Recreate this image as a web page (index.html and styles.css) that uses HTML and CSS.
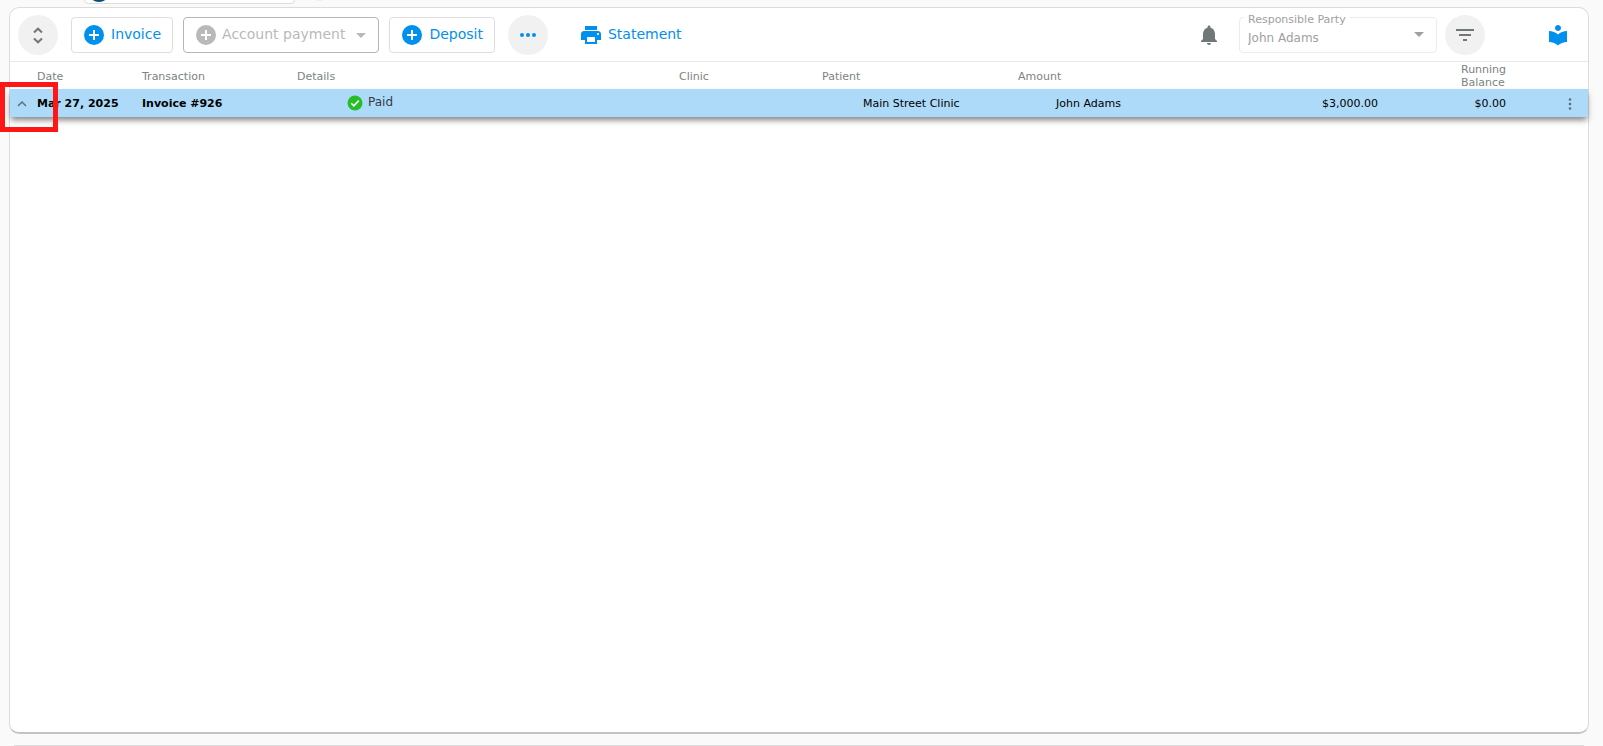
FILE: index.html
```html
<!DOCTYPE html>
<html lang="en">
<head>
<meta charset="utf-8">
<title>Transactions</title>
<link rel="stylesheet" href="styles.css">
</head>
<body>
<div class="page">
  <div class="tabs" aria-hidden="true">
    <div class="tabs__chip"><span class="tabs__avatar"></span></div>
    <div class="tabs__round"></div>
  </div>
  <main class="card">
    <div class="toolbar">
      <button class="round" type="button" aria-label="Expand all">
        <svg class="icon" viewBox="0 0 24 24"><path d="m8 9.500 4-3.800 4 3.800M8 15.500l4 3.800 4-3.800" fill="none" stroke="currentColor" stroke-width="2"/></svg>
      </button>
      <button class="btn btn--invoice" type="button">
        <svg class="icon" viewBox="0 0 24 24"><path d="M12 2a10 10 0 1 0 0 20 10 10 0 0 0 0-20zm5 11h-4v4h-2v-4H7v-2h4V7h2v4h4v2z"/></svg>
        <span>Invoice</span>
      </button>
      <button class="btn btn--disabled" type="button" disabled>
        <svg class="icon" viewBox="0 0 24 24"><path d="M12 2a10 10 0 1 0 0 20 10 10 0 0 0 0-20zm5 11h-4v4h-2v-4H7v-2h4V7h2v4h4v2z"/></svg>
        <span>Account payment</span>
        <svg class="icon icon--caret" viewBox="0 0 24 24"><path d="m7 10 5 5 5-5z"/></svg>
      </button>
      <button class="btn" type="button">
        <svg class="icon" viewBox="0 0 24 24"><path d="M12 2a10 10 0 1 0 0 20 10 10 0 0 0 0-20zm5 11h-4v4h-2v-4H7v-2h4V7h2v4h4v2z"/></svg>
        <span>Deposit</span>
      </button>
      <button class="round round--more" type="button" aria-label="More">
        <svg class="icon" viewBox="0 0 24 24"><path d="M6 10a2 2 0 1 0 0 4 2 2 0 0 0 0-4zm12 0a2 2 0 1 0 0 4 2 2 0 0 0 0-4zm-6 0a2 2 0 1 0 0 4 2 2 0 0 0 0-4z"/></svg>
      </button>
      <button class="btn btn--plain" type="button">
        <svg class="icon" viewBox="0 0 24 24"><path d="M19 8H5c-1.660 0-3 1.340-3 3v6h4v4h12v-4h4v-6c0-1.660-1.340-3-3-3zm-3 11H8v-5h8v5zm3-7c-.550 0-1-.450-1-1s.450-1 1-1 1 .450 1 1-.450 1-1 1zm-1-9H6v4h12V3z"/></svg>
        <span>Statement</span>
      </button>
      <div class="toolbar__end">
        <button class="iconbtn" type="button" aria-label="Notifications">
          <svg class="icon" viewBox="0 0 24 24"><path d="M12 22c1.100 0 2-.900 2-2h-4c0 1.100.890 2 2 2zm6-6v-5c0-3.070-1.640-5.640-4.500-6.320V4c0-.830-.670-1.500-1.500-1.500s-1.500.670-1.500 1.500v.680C7.630 5.360 6 7.920 6 11v5l-2 2v1h16v-1l-2-2z"/></svg>
        </button>
        <div class="field">
          <label class="field__label" for="party">Responsible Party</label>
          <select class="field__select" id="party" disabled><option>John Adams</option></select>
          <svg class="icon field__caret" viewBox="0 0 24 24"><path d="m7 10 5 5 5-5z"/></svg>
        </div>
        <button class="round" type="button" aria-label="Filter">
          <svg class="icon" viewBox="0 0 24 24"><path d="M10 18h4v-2h-4v2zM3 6v2h18V6H3zm3 7h12v-2H6v2z"/></svg>
        </button>
        <button class="iconbtn iconbtn--guide" type="button" aria-label="Guide">
          <svg class="icon" viewBox="0 0 24 24"><path d="M12 11.550C9.640 9.350 6.480 8 3 8v11c3.480 0 6.640 1.350 9 3.550 2.360-2.190 5.520-3.550 9-3.550V8c-3.480 0-6.640 1.350-9 3.550zM12 8c1.660 0 3-1.340 3-3s-1.340-3-3-3-3 1.340-3 3 1.340 3 3 3z"/></svg>
        </button>
      </div>
    </div>
    <table class="ledger">
      <thead>
        <tr class="ledger__head">
          <td></td><th>Date</th><th>Transaction</th><th>Details</th><th>Clinic</th><th>Patient</th><th>Amount</th><th class="ledger__balance">Running<br>Balance</th>
        </tr>
      </thead>
      <tbody>
        <tr class="ledger__row">
          <td class="ledger__toggle">
            <button class="cellbtn" type="button" aria-label="Collapse">
              <svg class="icon icon--small" viewBox="0 0 16 16"><path d="m4 10 4-4 4 4" fill="none" stroke="currentColor" stroke-width="1.500"/></svg>
            </button>
            <span class="highlight"></span>
          </td>
          <td class="strong">Mar 27, 2025</td>
          <td class="strong">Invoice #926</td>
          <td class="status">
            <svg class="icon icon--small" viewBox="0 0 16 16"><circle cx="8" cy="8" r="7.500" fill="#26bd26"/><path d="m4.300 8.300 2.500 2.500 5-5.200" fill="none" stroke="#fff" stroke-width="1.600"/></svg>
            <span>Paid</span>
          </td>
          <td>Main Street Clinic</td>
          <td>John Adams</td>
          <td class="money">$3,000.00</td>
          <td class="money">$0.00</td>
          <td class="ledger__menu">
            <button class="cellbtn" type="button" aria-label="Row menu">
              <svg class="icon icon--small" viewBox="0 0 16 16"><circle cx="8" cy="3.500" r="1.300"/><circle cx="8" cy="8" r="1.300"/><circle cx="8" cy="12.500" r="1.300"/></svg>
            </button>
          </td>
        </tr>
      </tbody>
    </table>
  </main>
  <div class="nextcard"></div>
</div>
</body>
</html>
```
FILE: styles.css
```css
* { box-sizing: border-box; }

body {
  margin: 0;
  background: #fafafa;
  color: #000;
  font: 11px/13px Verdana, "DejaVu Sans", sans-serif;
}

button {
  margin: 0;
  padding: 0;
  border: 0;
  background: none;
  font: inherit;
  color: inherit;
}

.page {
  display: flex;
  flex-direction: column;
  height: 100vh;
  overflow: hidden;
  padding: 0 14px 0 9px;
}

.tabs {
  display: flex;
  align-items: flex-end;
  flex: none;
  gap: 12px;
  height: 4px;
  margin-bottom: 3px;
  padding-left: 75px;
}

.tabs__chip {
  display: flex;
  align-items: flex-end;
  width: 211px;
  height: 32px;
  padding: 0 3px 1px;
  border: 1px solid #dcdcdc;
  border-radius: 4px;
  background: #fff;
}

.tabs__avatar {
  width: 22px;
  height: 22px;
  border-radius: 50%;
  background: #0b4a75;
}

.tabs__round {
  width: 24px;
  height: 28px;
  margin-bottom: 3px;
  border-radius: 50%;
  background: #eee;
}

.card {
  flex: 1;
  border: 1px solid #dcdcdc;
  border-bottom: 2px solid #c4c4c4;
  border-radius: 10px;
  background: #fff;
}

.nextcard {
  flex: none;
  height: 1px;
  margin: 11px 5px 0;
  background: #dcdcdc;
}

.icon {
  display: block;
  flex: none;
  width: 24px;
  height: 24px;
  fill: currentColor;
}

.icon--small {
  width: 16px;
  height: 16px;
}

.toolbar {
  display: flex;
  align-items: center;
  height: 54px;
  padding: 0 18px 0 8px;
  border-bottom: 1px solid #e8e8e8;
  font-size: 14px;
  color: #0090ee;
}

.round {
  display: grid;
  place-items: center;
  flex: none;
  width: 40px;
  height: 40px;
  border-radius: 50%;
  background: #f1f1f1;
  color: #6f7777;
}

.round--more {
  margin: 0 20px 0 3px;
  color: #0090ee;
}

.btn {
  display: flex;
  align-items: center;
  gap: 5px;
  height: 36px;
  margin-right: 10px;
  padding: 0 11px 0 10px;
  border: 1px solid #dedede;
  border-radius: 4px;
}

.btn--invoice { margin-left: 13px; }

.btn--disabled {
  gap: 4px;
  padding-right: 5px;
  border-color: #b5b5b5;
  color: #b9b9b9;
}

.btn--plain { border-color: transparent; }

.toolbar__end {
  display: flex;
  align-items: center;
  margin-left: auto;
}

.iconbtn { color: #6f7777; }

.iconbtn--guide {
  margin-left: 61px;
  color: #0090ee;
}

.field {
  position: relative;
  width: 198px;
  height: 36px;
  margin: 0 8px 0 18px;
  border: 1px solid #ececec;
  border-radius: 4px;
  color: #a0a0a0;
}

.field__label {
  position: absolute;
  top: -5px;
  left: 4px;
  padding: 0 4px;
  background: #fff;
  font-size: 11px;
}

.field__select {
  width: 100%;
  height: 100%;
  padding: 8px 32px 0 8px;
  border: 0;
  background: none;
  appearance: none;
  font: inherit;
  font-size: 12px;
  color: inherit;
  opacity: 1;
}

.field__caret {
  position: absolute;
  top: 4px;
  right: 5px;
  pointer-events: none;
}

.ledger,
.ledger thead,
.ledger tbody { display: block; }

.ledger th,
.ledger td {
  padding: 0;
  text-align: left;
}

.ledger__head,
.ledger__row {
  display: grid;
  align-items: center;
}

.ledger__head {
  grid-template-columns: 27fr 105fr 155fr 382fr 143fr 196fr 443fr 127fr;
  padding-top: 1px;
  height: 27px;
  color: #7c8383;
}

.ledger__head th { font-weight: 400; }

.ledger__row {
  grid-template-columns: 27fr 105fr 155fr 566fr 193fr 144fr 178fr 128fr 82fr;
  height: 28px;
  padding-top: 1px;
  background: #aedaf9;
  box-shadow: 0 4px 6px -1px rgba(0, 0, 0, .5);
}

.ledger .strong { font-weight: 700; }

.ledger .status {
  display: flex;
  align-items: center;
  gap: 5px;
  padding: 0 0 2px 50px;
  font-size: 12px;
  color: #333c44;
}

.ledger .money { text-align: right; }

.ledger__toggle {
  position: relative;
  color: #56707f;
}

.cellbtn {
  display: block;
  margin-left: 4px;
}

.highlight {
  position: absolute;
  top: -14px;
  left: -10px;
  width: 58px;
  height: 50px;
  border: 5px solid #ff1616;
}

.ledger__menu {
  display: flex;
  justify-content: flex-end;
  color: #56707f;
}

.ledger__menu .cellbtn { margin-right: 10px; }
```
